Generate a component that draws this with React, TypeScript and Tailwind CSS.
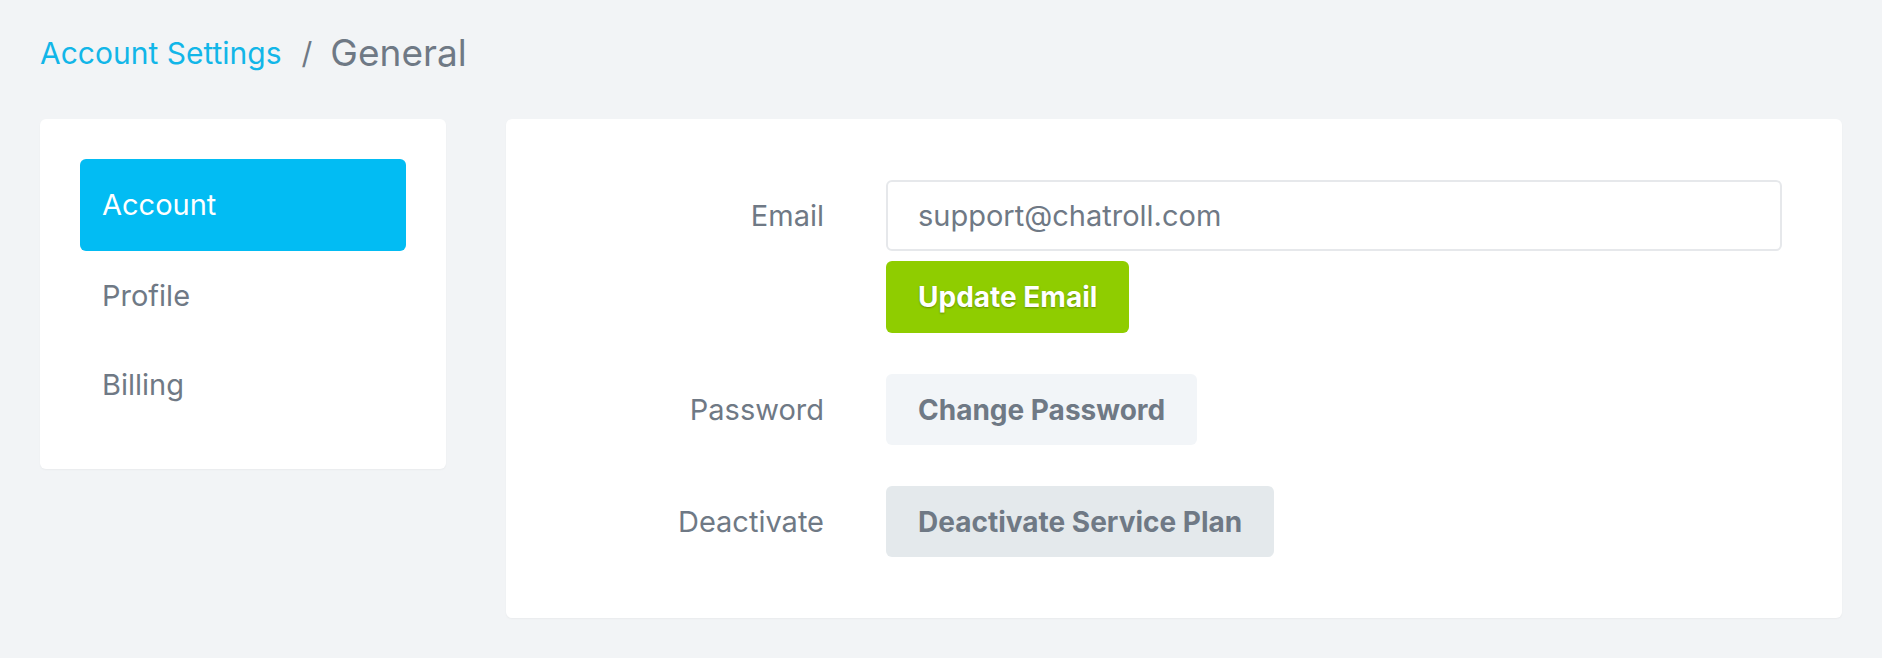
import React from "react";

const font = { fontFamily: "Inter, 'Open Sans', sans-serif" };

function Sidebar(): JSX.Element {
  const items = ["Account", "Profile", "Billing"];
  return (
    <div className="w-[406px] shrink-0 self-start rounded-md bg-white p-10 shadow-[0_1px_2px_rgba(0,0,0,0.04)]">
      {items.map((item, i) => (
        <div
          key={item}
          className={
            i === 0
              ? "flex h-[92px] items-center rounded-md bg-[#02bcf3] pl-[22px] text-[29px] text-white"
              : "flex h-[89px] items-center pl-[22px] text-[29px] text-[#6f7985]"
          }
        >
          {item}
        </div>
      ))}
    </div>
  );
}

function Row({
  label,
  children,
}: {
  label: string;
  children: React.ReactNode;
}): JSX.Element {
  return (
    <>
      <div className="flex h-[71px] items-center justify-end text-[29px] text-[#6f7985]">
        {label}
      </div>
      <div className="flex flex-col items-start gap-[10px]">{children}</div>
    </>
  );
}

function App(): JSX.Element {
  return (
    <div className="min-h-screen bg-[#f2f4f6] px-10 pt-[32px]" style={font}>
      <div className="flex h-[42px] items-center">
        <span className="text-[30px] text-[#12b6e8]">Account Settings</span>
        <span className="ml-[20px] mr-[18px] text-[30px] text-[#6f7985]">/</span>
        <span className="text-[37px] text-[#6f7985]">General</span>
      </div>

      <div className="mt-[45px] flex gap-[60px]">
        <Sidebar />

        <div className="flex-1 rounded-md bg-white px-[60px] py-[61px] shadow-[0_1px_2px_rgba(0,0,0,0.04)]">
          <div className="grid grid-cols-[258px_1fr] gap-x-[62px] gap-y-[41px]">
            <Row label="Email">
              <input
                type="text"
                defaultValue="support@chatroll.com"
                className="h-[71px] w-full rounded-md border-2 border-[#e6e8eb] px-[30px] text-[29px] text-[#6f7985] outline-none"
                style={font}
              />
              <button className="h-[72px] rounded-md bg-[#8fcd00] px-[32px] text-[28px] font-bold text-white [text-shadow:0_1px_2px_rgba(0,0,0,0.3)]">
                Update Email
              </button>
            </Row>
            <Row label="Password">
              <button className="h-[71px] rounded-md bg-[#f2f5f8] px-[32px] text-[28px] font-bold text-[#6f7985]">
                Change Password
              </button>
            </Row>
            <Row label="Deactivate">
              <button className="h-[71px] rounded-md bg-[#e4e9ec] px-[32px] text-[28px] font-bold text-[#6f7985]">
                Deactivate Service Plan
              </button>
            </Row>
          </div>
        </div>
      </div>
    </div>
  );
}

export default App;
